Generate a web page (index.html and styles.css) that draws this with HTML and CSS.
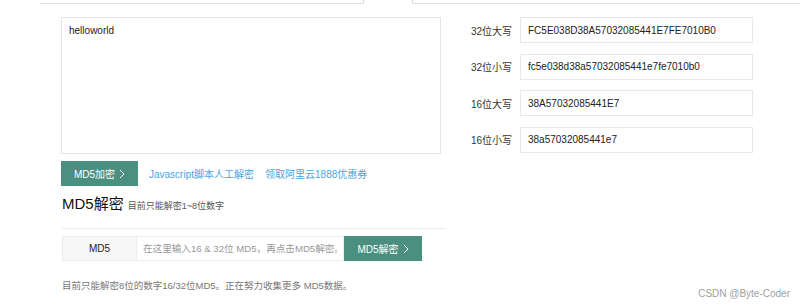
FILE: index.html
```html
<!DOCTYPE html>
<html lang="zh-CN">
<head>
    <meta charset="UTF-8">
    <title>MD5加密解密</title>
    <link rel="stylesheet" href="styles.css">
</head>
<body>

    <div class="tabs">
        <div class="tab-line tab-left"></div>
        <div class="tab-active"></div>
        <div class="tab-line tab-right"></div>
    </div>

    <div class="encrypt">
        <div class="left">
            <textarea class="source">helloworld</textarea>
            <div class="actions">
                <button class="btn">MD5加密 <svg class="chev" viewBox="0 0 6 10"><polyline points="1,1 5,5 1,9"/></svg></button>
                <a class="link" href="#">Javascript脚本人工解密</a>
                <a class="link" href="#">领取阿里云1888优惠券</a>
            </div>
        </div>
        <div class="results">
            <div class="row">
                <label>32位大写</label>
                <input type="text" value="FC5E038D38A57032085441E7FE7010B0">
            </div>
            <div class="row">
                <label>32位小写</label>
                <input type="text" value="fc5e038d38a57032085441e7fe7010b0">
            </div>
            <div class="row">
                <label>16位大写</label>
                <input type="text" value="38A57032085441E7">
            </div>
            <div class="row">
                <label>16位小写</label>
                <input type="text" value="38a57032085441e7">
            </div>
        </div>
    </div>

    <div class="decrypt">
        <h2>MD5解密 <small>目前只能解密1~8位数字</small></h2>
        <div class="group">
            <span class="addon">MD5</span>
            <input type="text" placeholder="在这里输入16 &amp; 32位 MD5，再点击MD5解密。">
            <button class="btn">MD5解密 <svg class="chev" viewBox="0 0 6 10"><polyline points="1,1 5,5 1,9"/></svg></button>
        </div>
        <p class="note">目前只能解密8位的数字16/32位MD5。正在努力收集更多 MD5数据。</p>
    </div>

    <div class="watermark">CSDN @Byte-Coder</div>

</body>
</html>
```

FILE: styles.css
```css
body {
    margin: 0;
    background: #fff;
    font-family: 'Liberation Sans', 'Noto Sans CJK SC', sans-serif;
    color: #333;
    font-size: 10px;
    height: 304px;
    overflow: hidden;
    position: relative;
}
.tabs {
    display: flex;
    height: 4px;
}
.tab-line {
    border-bottom: 1px solid #e0e0e0;
}
.tab-left {
    margin-left: 40px;
    width: 323px;
}
.tab-active {
    width: 48px;
    border-left: 1px solid #e0e0e0;
    border-right: 1px solid #e0e0e0;
}
.tab-right {
    flex: 1;
}
.encrypt {
    display: flex;
    padding-left: 61px;
    margin-top: 13px;
}
.left {
    width: 380px;
}
.source {
    display: block;
    box-sizing: border-box;
    width: 380px;
    height: 137px;
    margin: 0;
    padding: 7px 7px;
    border: 1px solid #e6e6e6;
    resize: none;
    font-family: 'Liberation Sans', 'Noto Sans CJK SC', sans-serif;
    font-size: 10px;
    color: #222;
    outline: none;
}
.actions {
    display: flex;
    align-items: center;
    margin-top: 7px;
}
.btn {
    display: flex;
    align-items: center;
    justify-content: center;
    border: none;
    background-color: #4b8f7f;
    color: #fff;
    font-family: 'Liberation Sans', 'Noto Sans CJK SC', sans-serif;
    font-size: 10px;
    height: 25px;
    width: 77px;
    padding: 0;
    cursor: pointer;
}
.chev {
    width: 6px;
    height: 10px;
    margin-left: 4px;
    fill: none;
    stroke: #fff;
    stroke-width: 1;
}
.link {
    color: #4ea3de;
    text-decoration: none;
    font-size: 10px;
    margin-left: 11px;
}
.results {
    margin-left: 30px;
}
.row {
    display: flex;
    align-items: center;
    margin-bottom: 10.5px;
}
.row label {
    width: 49px;
    font-size: 10px;
    color: #333;
}
.row input {
    box-sizing: border-box;
    width: 233px;
    height: 26px;
    border: 1px solid #e8e8e8;
    padding: 0 7px;
    font-family: 'Liberation Sans', 'Noto Sans CJK SC', sans-serif;
    font-size: 10px;
    color: #222;
    outline: none;
}
.decrypt {
    padding-left: 62px;
}
.decrypt h2 {
    margin: 0;
    padding: 8px 0 12px;
    width: 383px;
    border-bottom: 1px solid #eaeaea;
    font-size: 15px;
    font-weight: normal;
    color: #111;
    line-height: 20px;
}
.decrypt h2 small {
    font-size: 9px;
    color: #555;
}
.group {
    display: flex;
    margin-top: 7px;
    height: 25px;
}
.addon {
    box-sizing: border-box;
    width: 74px;
    display: flex;
    align-items: center;
    justify-content: center;
    background: #f7f7f7;
    border: 1px solid #ececec;
    border-right: none;
    font-size: 10px;
    color: #222;
}
.group input {
    box-sizing: border-box;
    width: 208px;
    height: 25px;
    border: 1px solid #ececec;
    padding: 0 6px;
    font-family: 'Liberation Sans', 'Noto Sans CJK SC', sans-serif;
    font-size: 9.6px;
    outline: none;
}
.group input::placeholder {
    color: #999;
}
.group .btn {
    width: 78px;
}
.note {
    margin: 17px 0 0;
    font-size: 9.5px;
    color: #777;
}
.watermark {
    position: absolute;
    right: 10px;
    bottom: 5px;
    font-size: 10px;
    color: #a0a0a0;
}
```
